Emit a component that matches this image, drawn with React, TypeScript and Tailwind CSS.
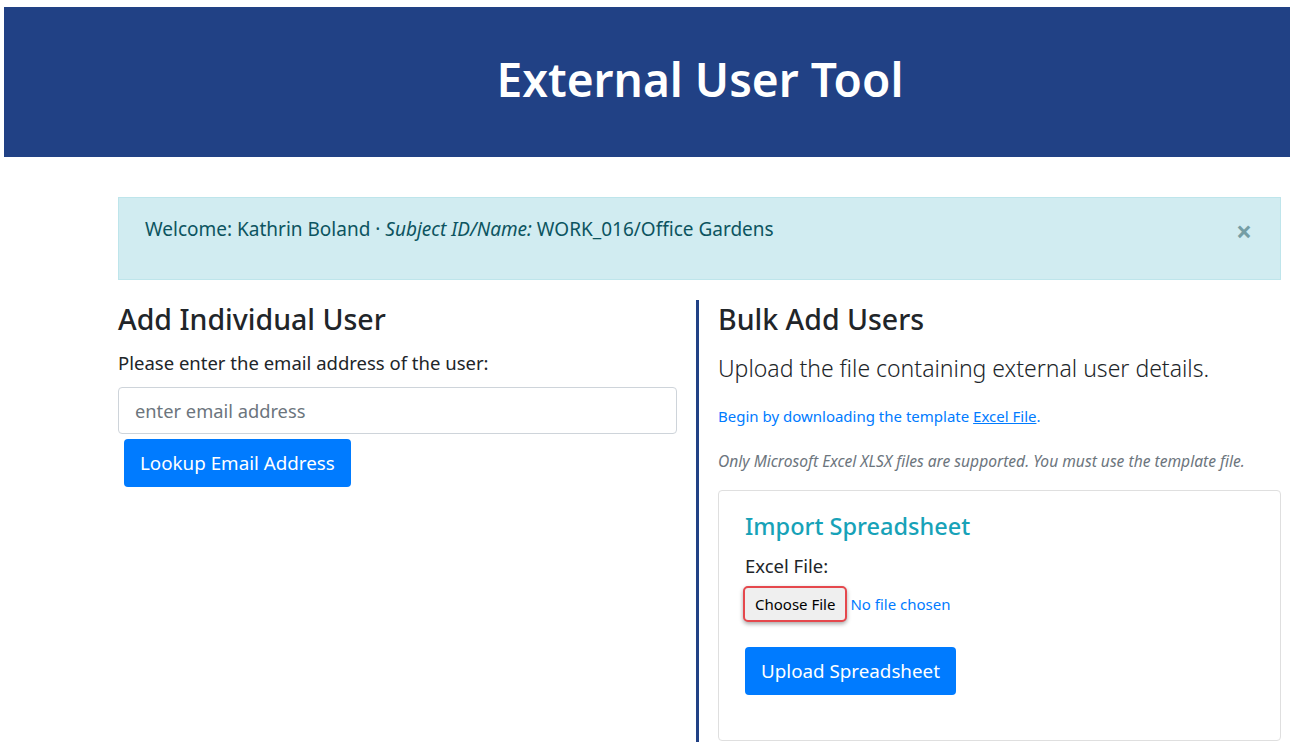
import React from 'react';

const font = { fontFamily: '"Noto Sans", "Open Sans", sans-serif' };

const App = () => {
  return (
    <div className="min-h-screen bg-white text-[#212529]" style={font}>
      <div className="ml-[4px] mt-[7px] h-[150px] bg-[#214185] flex items-center justify-center pl-[106px] pb-[6px]">
        <h1 className="text-[46px] font-semibold text-white leading-none">External User Tool</h1>
      </div>

      <div className="ml-[118px] mr-[9px] mt-[40px]">
        <div className="h-[83px] bg-[#d1ecf1] border border-[#bee5eb] text-[#0c5460] flex justify-between pl-[26px] pr-[28px] pt-[17px]">
          <div className="text-[19px]">
            Welcome: Kathrin Boland · <i>Subject ID/Name:</i> WORK_016/Office Gardens
          </div>
          <div className="text-[28px] leading-none font-bold text-[#5f8b93] opacity-80 pt-[2px]">×</div>
        </div>

        <div className="flex mt-[20px]">
          <div className="w-[559px] pt-[2px]">
            <h3 className="text-[28.5px] font-medium leading-tight">Add Individual User</h3>
            <p className="text-[18.5px] mt-[11px]">Please enter the email address of the user:</p>
            <input
              type="text"
              placeholder="enter email address"
              className="mt-[11px] w-full h-[47px] border border-[#ced4da] rounded-[4px] px-[16px] text-[18.3px] placeholder:text-[#6c757d]"
            />
            <button className="mt-[5px] ml-[6px] h-[48px] px-[16px] bg-[#007bff] text-white text-[18.8px] rounded-[4px]">
              Lookup Email Address
            </button>
          </div>

          <div className="ml-[19px] border-l-[3px] border-[#214185] pl-[19px] flex-1 pt-[2px] h-[442px]">
            <h3 className="text-[28.5px] font-medium leading-tight">Bulk Add Users</h3>
            <p className="text-[23px] font-light mt-[13px]">Upload the file containing external user details.</p>
            <p className="text-[15px] text-[#007bff] mt-[20px]">
              Begin by downloading the template <span className="underline">Excel File</span>.
            </p>
            <p className="text-[15.6px] italic text-[#6c757d] mt-[22px]">
              Only Microsoft Excel XLSX files are supported. You must use the template file.
            </p>
            <div className="mt-[17px] border border-[#dfdfdf] rounded-[4px] h-[251px] px-[26px] pt-[21px]">
              <h4 className="text-[23.5px] font-medium text-[#17a2b8] leading-tight">Import Spreadsheet</h4>
              <p className="text-[18.5px] mt-[11px]">Excel File:</p>
              <div className="flex items-center mt-[6px] -ml-[2px]">
                <button className="h-[36px] px-[10px] bg-[#efefef] text-[15px] text-black rounded-[5px] border-[2px] border-[#e5484d] shadow-[0_2px_4px_rgba(0,0,0,0.35)]">
                  Choose File
                </button>
                <span className="ml-[3px] text-[15px] text-[#007bff]">No file chosen</span>
              </div>
              <button className="mt-[25px] h-[48px] px-[16px] bg-[#007bff] text-white text-[18.8px] rounded-[4px]">
                Upload Spreadsheet
              </button>
            </div>
          </div>
        </div>
      </div>
    </div>
  );
};

export default App;
